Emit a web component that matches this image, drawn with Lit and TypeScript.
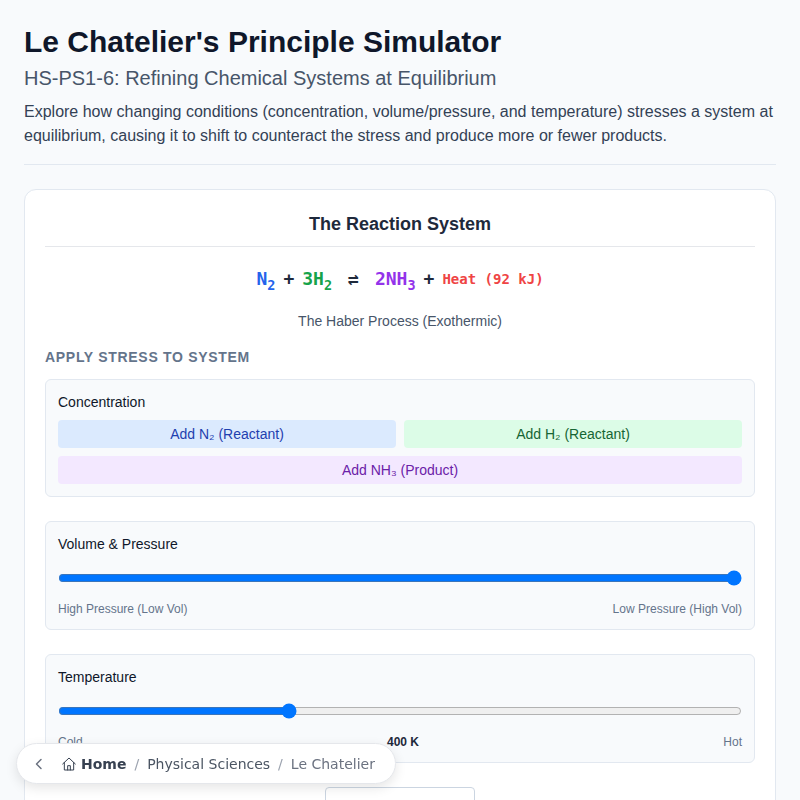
import { LitElement, html, css } from "lit";
import { customElement, state } from "lit/decorators.js";

@customElement("app-root")
export class AppRoot extends LitElement {
  @state() volume = 100;
  @state() temperature = 400;

  static styles = css`
    :host {
      display: block;
      min-height: 100vh;
      background: #f8fafc;
      font-family: "Liberation Sans", Arial, sans-serif;
      color: #1e293b;
    }
    .page {
      padding: 24px;
    }
    .header {
      padding-bottom: 16px;
      border-bottom: 1px solid #e2e8f0;
      margin-bottom: 24px;
    }
    h1 {
      margin: 0;
      font-size: 30px;
      line-height: 36px;
      font-weight: 700;
      color: #0f172a;
    }
    .subtitle {
      margin: 4px 0 0;
      font-size: 20px;
      line-height: 28px;
      font-weight: 400;
      color: #475569;
    }
    .intro {
      margin: 8px 0 0;
      font-size: 16px;
      line-height: 24px;
      color: #334155;
    }
    .card {
      background: #fff;
      border: 1px solid #e2e8f0;
      border-radius: 12px;
      padding: 20px;
    }
    .card h3 {
      margin: 0;
      padding-bottom: 8px;
      border-bottom: 1px solid #e5e7eb;
      font-size: 18px;
      line-height: 28px;
      font-weight: 700;
      text-align: center;
    }
    .equation {
      display: flex;
      justify-content: center;
      align-items: center;
      gap: 8px;
      margin-top: 18px;
      font-family: "DejaVu Sans Mono", monospace;
      font-size: 18px;
      line-height: 28px;
      font-weight: 700;
      color: #1e293b;
    }
    .equation sub {
      font-size: 13.5px;
      line-height: 0;
    }
    .n2 { color: #2563eb; }
    .h2 { color: #16a34a; }
    .nh3 { color: #9333ea; }
    .heat { color: #ef4444; font-size: 14px; }
    .arrow { margin: 0 8px; }
    .caption {
      margin: 18px 0 0;
      font-size: 14px;
      line-height: 20px;
      text-align: center;
      color: #475569;
    }
    .section {
      margin: 16px 0 12px;
      font-size: 14px;
      line-height: 20px;
      font-weight: 700;
      letter-spacing: 0.7px;
      text-transform: uppercase;
      color: #64748b;
    }
    .group {
      background: #f8fafc;
      border: 1px solid #e2e8f0;
      border-radius: 6px;
      padding: 12px;
      margin-bottom: 24px;
    }
    .group-label {
      font-size: 14px;
      line-height: 20px;
      color: #0f172a;
    }
    .buttons {
      display: grid;
      grid-template-columns: 1fr 1fr;
      gap: 8px;
      margin-top: 8px;
    }
    .buttons button {
      height: 28px;
      padding: 0;
      border: none;
      border-radius: 4px;
      font: inherit;
      font-size: 14px;
      cursor: pointer;
    }
    .blue { background: #dbeafe; color: #1e40af; }
    .green { background: #dcfce7; color: #166534; }
    .purple { background: #f3e8ff; color: #6b21a8; grid-column: span 2; }
    input[type="range"] {
      display: block;
      width: 100%;
      height: 16px;
      margin: 16px 0 15px;
    }
    .scale {
      display: flex;
      justify-content: space-between;
      font-size: 12px;
      line-height: 16px;
      color: #64748b;
    }
    .scale strong {
      font-weight: 700;
      color: #1e293b;
    }
    .actions {
      display: flex;
      justify-content: center;
    }
    .reset {
      width: 150px;
      height: 40px;
      background: #fff;
      border: 1px solid #cbd5e1;
      border-radius: 4px;
      font: inherit;
      font-size: 14px;
      color: #334155;
    }
    .crumbs {
      position: fixed;
      left: 16px;
      bottom: 16px;
      display: flex;
      align-items: center;
      height: 41px;
      box-sizing: border-box;
      padding: 0 20px 0 14px;
      background: #fff;
      border: 1px solid #e5e7eb;
      border-radius: 999px;
      box-shadow: 0 4px 12px rgba(0, 0, 0, 0.1);
      font-family: "DejaVu Sans", sans-serif;
      font-size: 14px;
      white-space: nowrap;
    }
    .crumbs svg {
      display: block;
      fill: none;
      stroke-linecap: round;
      stroke-linejoin: round;
    }
    .back {
      stroke: #6b7280;
      stroke-width: 1.5;
      margin-right: 14px;
    }
    .home-icon {
      stroke: #374151;
      stroke-width: 1.5;
      margin-right: 4px;
    }
    .home {
      font-weight: 700;
      color: #374151;
    }
    .sep {
      margin: 0 8px;
      color: #9ca3af;
    }
    .crumb {
      color: #4b5563;
    }
    .current {
      color: #6b7280;
    }
  `;

  render() {
    return html`
      <div class="page">
        <header class="header">
          <h1>Le Chatelier's Principle Simulator</h1>
          <h2 class="subtitle">HS-PS1-6: Refining Chemical Systems at Equilibrium</h2>
          <p class="intro">
            Explore how changing conditions (concentration, volume/pressure, and temperature)
            stresses a system at equilibrium, causing it to shift to counteract the stress and
            produce more or fewer products.
          </p>
        </header>

        <section class="card">
          <h3>The Reaction System</h3>
          <div class="equation">
            <span class="n2">N<sub>2</sub></span>
            <span>+</span>
            <span class="h2">3H<sub>2</sub></span>
            <span class="arrow">⇌</span>
            <span class="nh3">2NH<sub>3</sub></span>
            <span>+</span>
            <span class="heat">Heat (92 kJ)</span>
          </div>
          <p class="caption">The Haber Process (Exothermic)</p>

          <div class="section">Apply Stress to System</div>

          <div class="group">
            <div class="group-label">Concentration</div>
            <div class="buttons">
              <button class="blue">Add N₂ (Reactant)</button>
              <button class="green">Add H₂ (Reactant)</button>
              <button class="purple">Add NH₃ (Product)</button>
            </div>
          </div>

          <div class="group">
            <div class="group-label">Volume &amp; Pressure</div>
            <input
              type="range"
              min="0"
              max="100"
              .value=${String(this.volume)}
              @input=${(e: Event) => (this.volume = +(e.target as HTMLInputElement).value)}
            />
            <div class="scale">
              <span>High Pressure (Low Vol)</span>
              <span>Low Pressure (High Vol)</span>
            </div>
          </div>

          <div class="group">
            <div class="group-label">Temperature</div>
            <input
              type="range"
              min="300"
              max="600"
              .value=${String(this.temperature)}
              @input=${(e: Event) => (this.temperature = +(e.target as HTMLInputElement).value)}
            />
            <div class="scale">
              <span>Cold</span>
              <strong>${this.temperature} K</strong>
              <span>Hot</span>
            </div>
          </div>

          <div class="actions">
            <button class="reset">Reset System</button>
          </div>
        </section>
      </div>

      <nav class="crumbs">
        <svg class="back" width="16" height="16" viewBox="0 0 16 16">
          <path d="M10 3.5 5.5 8l4.5 4.5" />
        </svg>
        <svg class="home-icon" width="16" height="16" viewBox="0 0 24 24">
          <path d="M2.5 12 12 3l9.5 9" />
          <path d="M5 9.8V21h14V9.8" />
          <path d="M10 21v-6.5h4V21" />
        </svg>
        <span class="home">Home</span>
        <span class="sep">/</span>
        <span class="crumb">Physical Sciences</span>
        <span class="sep">/</span>
        <span class="current">Le Chatelier</span>
      </nav>
    `;
  }
}
